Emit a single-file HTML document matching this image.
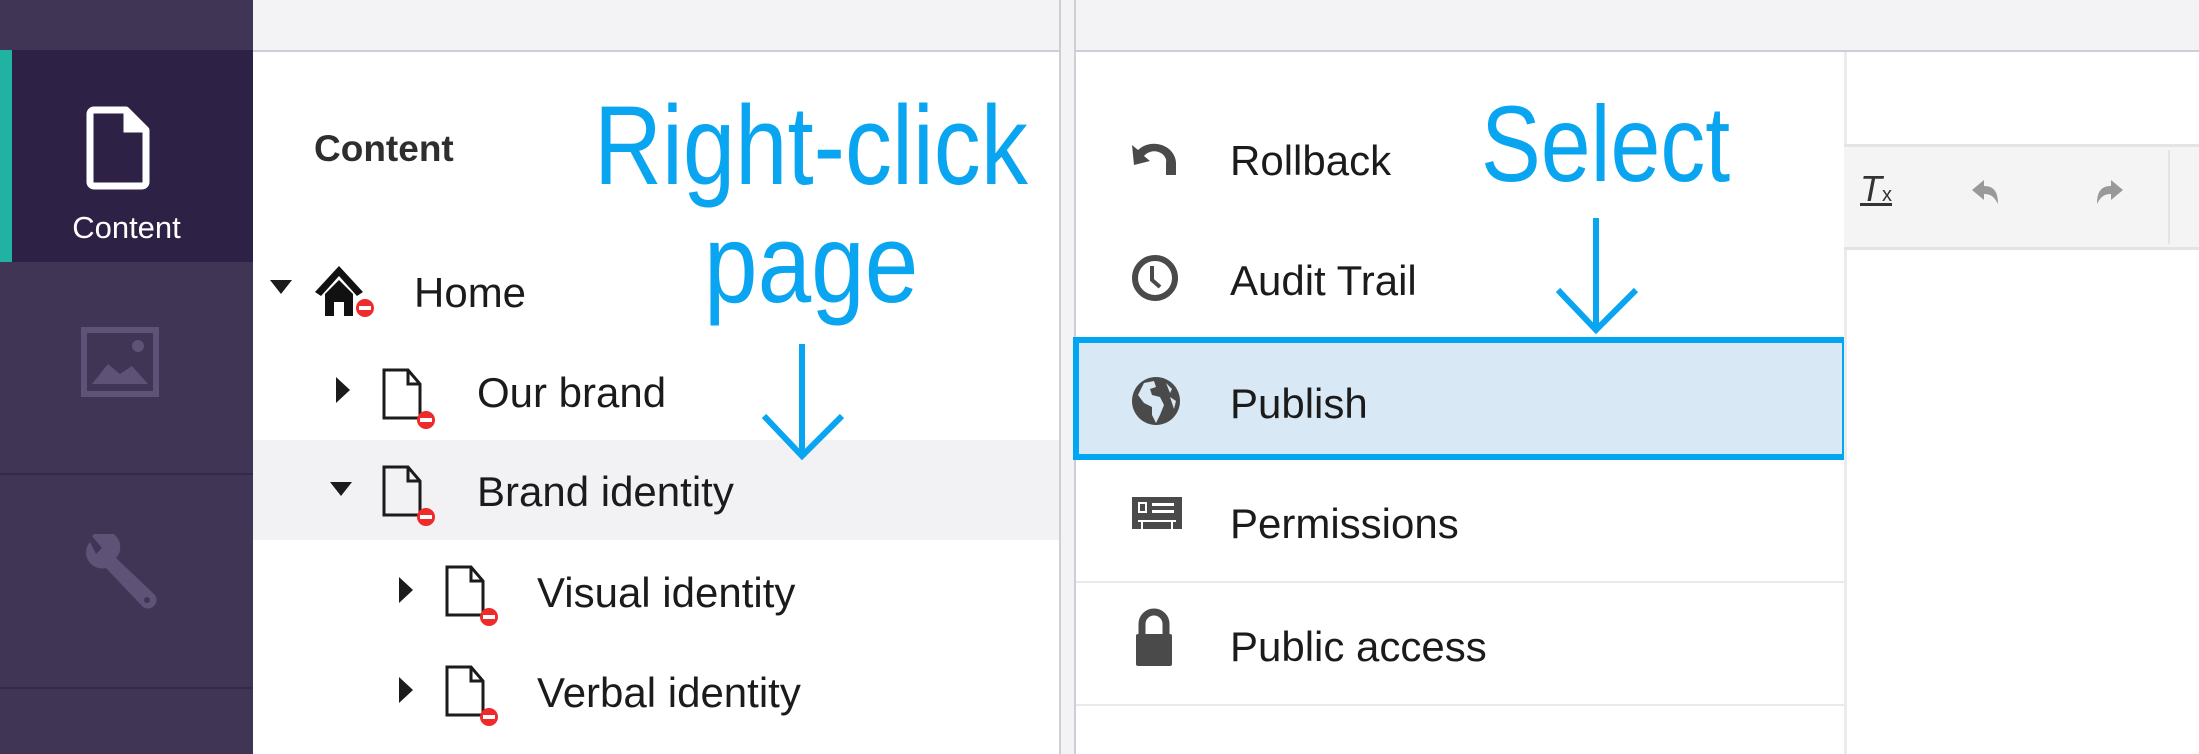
<!DOCTYPE html>
<html><head><meta charset="utf-8"><style>
*{margin:0;padding:0;box-sizing:border-box}
body{width:2199px;height:754px;overflow:hidden;background:#fff;font-family:"Liberation Sans",sans-serif;position:relative}
.a{position:absolute}
.t{position:absolute;font-size:42px;color:#1b1b1b;line-height:1;transform-origin:left center}
.blue{position:absolute;color:#0aa5f0;line-height:1;font-size:112px;transform-origin:left top}
</style></head><body>
<!-- sidebar -->
<div class="a" style="left:0;top:0;width:253px;height:754px;background:#413556"></div>
<div class="a" style="left:0;top:50px;width:253px;height:212px;background:#2e2146"></div>
<div class="a" style="left:0;top:50px;width:12px;height:212px;background:#20b2a2"></div>
<div class="a" style="left:0;top:473px;width:253px;height:2px;background:#352a4b"></div>
<div class="a" style="left:0;top:687px;width:253px;height:2px;background:#352a4b"></div>
<svg class="a" style="left:86px;top:106px" width="66" height="84" viewBox="0 0 66 84"><path d="M8 4 H40 L60 24 V76 a4 4 0 0 1 -4 4 H8 a4 4 0 0 1 -4 -4 V8 a4 4 0 0 1 4 -4 Z" fill="none" stroke="#fff" stroke-width="7" stroke-linejoin="round"/><path d="M40 4 V24 H60" fill="#fff" stroke="#fff" stroke-width="5"/></svg>
<div class="a" style="left:0;top:210px;width:253px;text-align:center;color:#fff;font-size:31px">Content</div>
<svg class="a" style="left:80px;top:326px" width="80" height="72" viewBox="0 0 80 72"><rect x="4" y="4" width="72" height="64" fill="none" stroke="#5e5277" stroke-width="6"/><circle cx="58" cy="20" r="6" fill="#5e5277"/><path d="M12 58 L28 38 L40 48 L52 40 L68 58 Z" fill="#5e5277"/></svg>
<svg class="a" style="left:80px;top:534px" width="80" height="80" viewBox="0 0 80 80"><path d="M10 8 A16 16 0 0 0 26 34 L62 72 A8 8 0 0 0 74 60 L36 24 A16 16 0 0 0 12 2 L22 14 L16 20 Z" fill="#5e5277"/><circle cx="67" cy="66" r="3" fill="#413556"/></svg>
<!-- tree panel -->
<div class="a" style="left:253px;top:0;width:807px;height:52px;background:#f3f2f5;border-bottom:2px solid #cfcdd6"></div>
<div class="a" style="left:253px;top:52px;width:807px;height:702px;background:#fff"></div>
<div class="a" style="left:253px;top:440px;width:807px;height:100px;background:#f2f1f4"></div>
<div class="t" style="left:314px;top:130px;font-size:37px;font-weight:bold;color:#2e2e2e">Content</div>
<svg class="a" style="left:270px;top:280px" width="22" height="16"><path d="M0 0H22L11 14Z" fill="#1b1b1b"/></svg>
<svg class="a" style="left:313px;top:264px" width="66" height="56" viewBox="0 0 66 56"><path d="M26 2 L2 28 L8 32 L26 12 L44 32 L50 28 Z" fill="#111"/><path d="M12 30 L26 16 L40 30 V52 H31 V38 H21 V52 H12 Z" fill="#111"/><circle cx="52" cy="44" r="9" fill="#ee2a2a"/><rect x="46" y="42" width="12" height="4" fill="#fff"/></svg>
<div class="t" style="left:414px;top:272px">Home</div>
<svg class="a" style="left:336px;top:377px" width="14" height="26"><path d="M0 0V26L14 13Z" fill="#1b1b1b"/></svg>
<svg class="a" style="left:382px;top:368px" width="58" height="62" viewBox="0 0 58 62"><path d="M2 2H26L38 16V50H2Z" fill="none" stroke="#1b1b1b" stroke-width="3"/><path d="M26 2V16H38" fill="none" stroke="#1b1b1b" stroke-width="3"/><circle cx="44" cy="52" r="9" fill="#ee2a2a"/><rect x="38" y="50" width="12" height="4" fill="#fff"/></svg>
<div class="t" style="left:477px;top:372px">Our brand</div>
<svg class="a" style="left:330px;top:482px" width="22" height="16"><path d="M0 0H22L11 14Z" fill="#1b1b1b"/></svg>
<svg class="a" style="left:382px;top:465px" width="58" height="62" viewBox="0 0 58 62"><path d="M2 2H26L38 16V50H2Z" fill="none" stroke="#1b1b1b" stroke-width="3"/><path d="M26 2V16H38" fill="none" stroke="#1b1b1b" stroke-width="3"/><circle cx="44" cy="52" r="9" fill="#ee2a2a"/><rect x="38" y="50" width="12" height="4" fill="#fff"/></svg>
<div class="t" style="left:477px;top:471px">Brand identity</div>
<svg class="a" style="left:399px;top:577px" width="14" height="26"><path d="M0 0V26L14 13Z" fill="#1b1b1b"/></svg>
<svg class="a" style="left:445px;top:565px" width="58" height="62" viewBox="0 0 58 62"><path d="M2 2H26L38 16V50H2Z" fill="none" stroke="#1b1b1b" stroke-width="3"/><path d="M26 2V16H38" fill="none" stroke="#1b1b1b" stroke-width="3"/><circle cx="44" cy="52" r="9" fill="#ee2a2a"/><rect x="38" y="50" width="12" height="4" fill="#fff"/></svg>
<div class="t" style="left:537px;top:572px">Visual identity</div>
<svg class="a" style="left:399px;top:677px" width="14" height="26"><path d="M0 0V26L14 13Z" fill="#1b1b1b"/></svg>
<svg class="a" style="left:445px;top:665px" width="58" height="62" viewBox="0 0 58 62"><path d="M2 2H26L38 16V50H2Z" fill="none" stroke="#1b1b1b" stroke-width="3"/><path d="M26 2V16H38" fill="none" stroke="#1b1b1b" stroke-width="3"/><circle cx="44" cy="52" r="9" fill="#ee2a2a"/><rect x="38" y="50" width="12" height="4" fill="#fff"/></svg>
<div class="t" style="left:537px;top:672px">Verbal identity</div>
<!-- divider -->
<div class="a" style="left:1059px;top:0;width:17px;height:754px;background:#f3f2f5;border-left:2px solid #cfcdd6;border-right:2px solid #cfcdd6"></div>
<!-- menu panel -->
<div class="a" style="left:1076px;top:0;width:768px;height:52px;background:#f3f2f5;border-bottom:2px solid #cfcdd6"></div>
<div class="a" style="left:1076px;top:581px;width:768px;height:2px;background:#e9e8ee"></div>
<div class="a" style="left:1076px;top:704px;width:768px;height:2px;background:#e9e8ee"></div>
<div class="a" style="left:1073px;top:337px;width:775px;height:123px;background:#d8e8f4;border:6px solid #00a6f2"></div>
<svg class="a" style="left:1130px;top:141px" width="50" height="36" viewBox="0 0 50 36"><path d="M2 4 L4 24 L20 20 L14 15 A12 10 0 0 1 36 22 V34 H46 V22 A22 20 0 0 0 8 9 Z" fill="#4a4a4a"/></svg>
<div class="t" style="left:1230px;top:140px">Rollback</div>
<svg class="a" style="left:1130px;top:253px" width="50" height="50" viewBox="0 0 50 50"><circle cx="25" cy="25" r="20" fill="none" stroke="#4a4a4a" stroke-width="6"/><path d="M22 13V27L30 34" fill="none" stroke="#4a4a4a" stroke-width="4"/></svg>
<div class="t" style="left:1230px;top:260px">Audit Trail</div>
<svg class="a" style="left:1130px;top:375px" width="52" height="52" viewBox="0 0 52 52"><circle cx="26" cy="26" r="24" fill="#4a4a4a"/><path d="M14 8 L24 6 L26 12 L20 14 L22 20 L30 22 L34 30 L30 40 L26 48 L22 40 L22 32 L14 28 L8 20 Z M36 8 L42 14 L40 18 Z M40 22 L46 26 L44 34 Z" fill="#d8e8f4"/></svg>
<div class="t" style="left:1230px;top:383px">Publish</div>
<svg class="a" style="left:1130px;top:495px" width="54" height="42" viewBox="0 0 54 42"><rect x="2" y="2" width="50" height="32" fill="#4a4a4a"/><rect x="9" y="8" width="7" height="9" fill="none" stroke="#fff" stroke-width="2"/><rect x="22" y="8" width="22" height="3" fill="#fff"/><rect x="22" y="15" width="22" height="3" fill="#fff"/><path d="M8 26H46 M12 26V34 M42 26V34" stroke="#fff" stroke-width="2"/></svg>
<div class="t" style="left:1230px;top:503px">Permissions</div>
<svg class="a" style="left:1134px;top:608px" width="40" height="60" viewBox="0 0 40 60"><path d="M8 26V16 A12 12 0 0 1 32 16 V26" fill="none" stroke="#4a4a4a" stroke-width="7"/><rect x="2" y="26" width="36" height="32" rx="2" fill="#4a4a4a"/></svg>
<div class="t" style="left:1230px;top:626px">Public access</div>
<!-- right panel -->
<div class="a" style="left:1844px;top:0;width:355px;height:754px;background:#fff;border-left:3px solid #ebebee"></div>
<div class="a" style="left:1844px;top:0;width:355px;height:52px;background:#f3f2f5;border-bottom:2px solid #cfcdd6"></div>
<div class="a" style="left:1844px;top:144px;width:355px;height:106px;background:#f4f4f5;border-top:3px solid #e4e4e7;border-bottom:3px solid #e4e4e7"></div>
<div class="a" style="left:1860px;top:168px;font-size:36px;font-style:italic;color:#333;text-decoration:underline">T<span style="font-size:20px;font-style:normal">x</span></div>
<svg class="a" style="left:1970px;top:178px" width="30" height="30" viewBox="0 0 30 30"><path d="M2 12 L14 2 V8 C24 8 28 14 28 26 C24 18 20 16 14 16 V22 Z" fill="#999"/></svg>
<svg class="a" style="left:2095px;top:178px" width="30" height="30" viewBox="0 0 30 30"><path d="M28 12 L16 2 V8 C6 8 2 14 2 26 C6 18 10 16 16 16 V22 Z" fill="#999"/></svg>
<div class="a" style="left:2168px;top:150px;width:2px;height:94px;background:#e4e4e7"></div>
<!-- annotations -->
<div class="blue" style="left:594px;top:90px;transform:scaleX(0.84)">Right-click</div>
<div class="blue" style="left:704px;top:208px;transform:scaleX(0.86)">page</div>
<div class="blue" style="left:1481px;top:90px;transform:scaleX(0.83);font-size:108px">Select</div>
<svg class="a" style="left:760px;top:340px" width="90" height="125"><path d="M42 4V116 M4 76 L42 116 L82 76" fill="none" stroke="#0aa5f0" stroke-width="6"/></svg>
<svg class="a" style="left:1554px;top:214px" width="90" height="125"><path d="M42 4V116 M4 76 L42 116 L82 76" fill="none" stroke="#0aa5f0" stroke-width="6"/></svg>
</body></html>
